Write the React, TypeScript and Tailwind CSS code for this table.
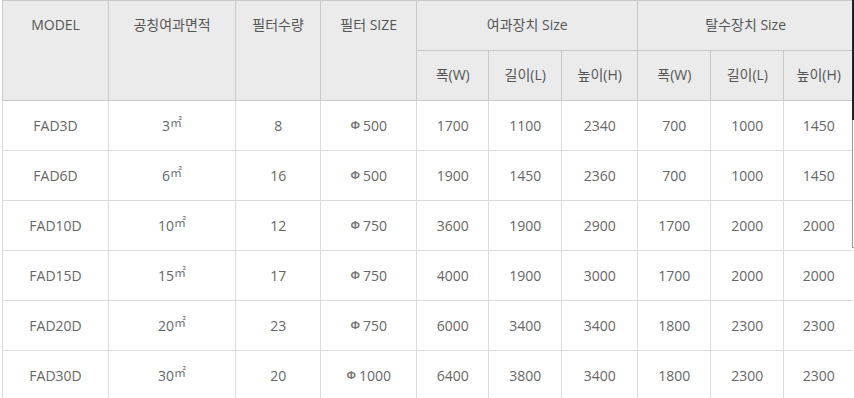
import React from "react";

interface Row {
  model: string;
  area: string;
  qty: string;
  size: string;
  filter: string[];
  dewater: string[];
}

const rows: Row[] = [
  { model: "FAD3D", area: "3", qty: "8", size: "500", filter: ["1700", "1100", "2340"], dewater: ["700", "1000", "1450"] },
  { model: "FAD6D", area: "6", qty: "16", size: "500", filter: ["1900", "1450", "2360"], dewater: ["700", "1000", "1450"] },
  { model: "FAD10D", area: "10", qty: "12", size: "750", filter: ["3600", "1900", "2900"], dewater: ["1700", "2000", "2000"] },
  { model: "FAD15D", area: "15", qty: "17", size: "750", filter: ["4000", "1900", "3000"], dewater: ["1700", "2000", "2000"] },
  { model: "FAD20D", area: "20", qty: "23", size: "750", filter: ["6000", "3400", "3400"], dewater: ["1800", "2300", "2300"] },
  { model: "FAD30D", area: "30", qty: "20", size: "1000", filter: ["6400", "3800", "3400"], dewater: ["1800", "2300", "2300"] },
];

const widths = [106, 127, 85, 96, 72, 73, 76, 73, 73, 69];

const th = "border border-[#c9c9c9] bg-[#ebebeb] font-normal text-[#555] align-top pt-[14px] leading-[20px]";
const td = "border border-[#dcdcdc] text-[#666] align-middle leading-[20px]";

export default function App() {
  return (
    <div
      className="flex w-[854px] h-[398px] overflow-hidden bg-white text-[14px]"
      style={{ fontFamily: '"Open Sans", "Noto Sans CJK KR", sans-serif' }}
    >
      <div className="pl-[2px] w-[852px]">
        <table className="border-collapse table-fixed w-[851px] text-center">
          <colgroup>
            {widths.map((w, i) => (
              <col key={i} style={{ width: w }} />
            ))}
          </colgroup>
          <thead>
            <tr className="h-[50px]">
              <th rowSpan={2} className={th}>MODEL</th>
              <th rowSpan={2} className={th}>공칭여과면적</th>
              <th rowSpan={2} className={th}>필터수량</th>
              <th rowSpan={2} className={th}>필터 SIZE</th>
              <th colSpan={3} className={th}>여과장치 Size</th>
              <th colSpan={3} className={th + " border-r-0"}>탈수장치 Size</th>
            </tr>
            <tr className="h-[50px]">
              {["폭(W)", "길이(L)", "높이(H)", "폭(W)", "길이(L)", "높이(H)"].map((t, i) => (
                <th key={i} className={th + (i === 5 ? " border-r-0" : "")}>{t}</th>
              ))}
            </tr>
          </thead>
          <tbody>
            {rows.map((r) => (
              <tr key={r.model} className="h-[50px]">
                <td className={td}>{r.model}</td>
                <td className={td}>
                  {r.area}
                  <span className="text-[12px] leading-none text-[#777] align-[4px]">㎡</span>
                </td>
                <td className={td}>{r.qty}</td>
                <td className={td}>
                  <span className="text-[11px] font-bold text-[#777] align-[2px] mr-[3px]">Φ</span>
                  {r.size}
                </td>
                {r.filter.map((v, i) => (
                  <td key={"f" + i} className={td}>{v}</td>
                ))}
                {r.dewater.map((v, i) => (
                  <td key={"d" + i} className={td + (i === 2 ? " border-r-0" : "")}>{v}</td>
                ))}
              </tr>
            ))}
          </tbody>
        </table>
      </div>
      <div className="w-[2px] flex flex-col">
        <div className="h-[120px] bg-[#1c2233]" />
        <div className="h-[128px] border-l border-b border-[#999]" />
      </div>
    </div>
  );
}
